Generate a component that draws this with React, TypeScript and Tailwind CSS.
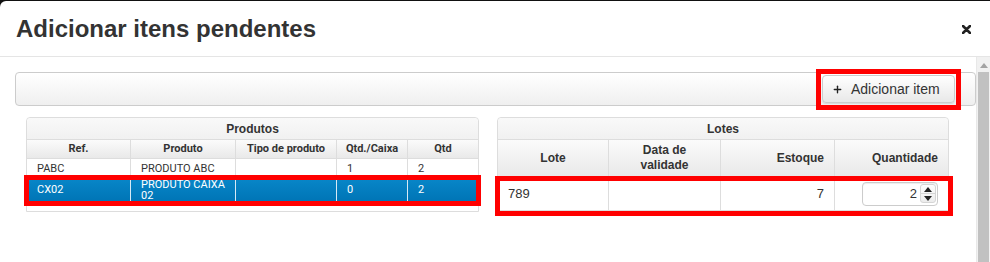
import { Plus } from 'lucide-react';

const PROD_COLS = 'grid grid-cols-[103px_105px_101px_71px_71px]';
const LOTE_COLS = 'grid grid-cols-[110px_112px_114px_114px]';

const prodHeaders = ['Ref.', 'Produto', 'Tipo de produto', 'Qtd./Caixa', 'Qtd'];

function ProdutosTable() {
  return (
    <div className="w-[453px] rounded-t-[4px] border border-[#dddddd] font-['Roboto',sans-serif] text-[11px] text-[#333]">
      <div className="flex h-[22px] items-center justify-center rounded-t-[4px] border-b border-[#dddddd] bg-linear-to-b from-[#f9f9f9] to-[#f1f1f1] font-['Liberation_Sans',sans-serif] text-[12px] font-bold">
        Produtos
      </div>
      <div className={`${PROD_COLS} h-[19px] border-b border-[#dddddd] bg-linear-to-b from-[#fbfbfb] to-[#e9e9e9] font-bold`}>
        {prodHeaders.map((h, i) => (
          <div key={h} className={`flex items-center justify-center ${i > 0 ? 'border-l border-[#dddddd]' : ''}`}>
            {h}
          </div>
        ))}
      </div>
      <div className={`${PROD_COLS} h-[20px]`}>
        {['PABC', 'PRODUTO ABC', '', '1', '2'].map((c, i) => (
          <div key={i} className={`flex items-center pl-[10px] ${i > 0 ? 'border-l border-[#dddddd]' : ''}`}>
            {c}
          </div>
        ))}
      </div>
      <div className="relative">
        <div className={`${PROD_COLS} h-[22px] bg-linear-to-b from-[#0886c8] to-[#0075b6] text-white`}>
          <div className="flex items-center pl-[10px]">CX02</div>
          <div className="flex flex-col justify-center border-l border-[#d7e9f5] pl-[10px] leading-[11px]">
            <span>PRODUTO CAIXA</span>
            <span>02</span>
          </div>
          <div className="border-l border-[#d7e9f5]" />
          <div className="flex items-center border-l border-[#d7e9f5] pl-[10px]">0</div>
          <div className="flex items-center border-l border-[#d7e9f5] pl-[10px]">2</div>
        </div>
        <div className="absolute -top-[4px] -right-[3px] -bottom-[5px] -left-[3px] border-[5px] border-[#ff0000]" />
      </div>
    </div>
  );
}

function Spinner() {
  return (
    <div className="flex h-[24px] w-[76px] items-center justify-end rounded-[4px] border border-[#cccccc] bg-white pr-[1px] shadow-[inset_0_1px_1px_rgba(0,0,0,0.075)]">
      <span className="mr-[3px] text-[13px] text-[#333]">2</span>
      <div className="flex h-[19px] w-[16px] flex-col rounded-[3px] border border-[#d5d5d5] bg-linear-to-b from-[#fdfdfd] to-[#ececec]">
        <div className="flex flex-1 items-center justify-center border-b border-[#d5d5d5]">
          <svg width="8" height="5" viewBox="0 0 8 5">
            <path d="M0 5 L4 0 L8 5 Z" fill="#222" />
          </svg>
        </div>
        <div className="flex flex-1 items-center justify-center">
          <svg width="8" height="5" viewBox="0 0 8 5">
            <path d="M0 0 L8 0 L4 5 Z" fill="#222" />
          </svg>
        </div>
      </div>
    </div>
  );
}

function LotesTable() {
  return (
    <div className="w-[452px] rounded-t-[4px] border border-[#dddddd] font-['Liberation_Sans',sans-serif] text-[12px] text-[#333]">
      <div className="flex h-[22px] items-center justify-center rounded-t-[4px] border-b border-[#dddddd] bg-linear-to-b from-[#f9f9f9] to-[#f1f1f1] font-bold">
        Lotes
      </div>
      <div className={`${LOTE_COLS} h-[37px] border-b border-[#dddddd] bg-linear-to-b from-[#fbfbfb] to-[#e9e9e9] font-bold leading-[15px]`}>
        <div className="flex items-center justify-center">Lote</div>
        <div className="flex items-center justify-center border-l border-[#dddddd] text-center">
          Data de
          <br />
          validade
        </div>
        <div className="flex items-center justify-end border-l border-[#dddddd] pr-[10px]">Estoque</div>
        <div className="flex items-center justify-end border-l border-[#dddddd] pr-[10px]">Quantidade</div>
      </div>
      <div className="relative">
        <div className={`${LOTE_COLS} h-[34px] border-b border-[#dddddd] text-[13px]`}>
          <div className="flex items-center pl-[10px]">789</div>
          <div className="border-l border-[#dddddd]" />
          <div className="flex items-center justify-end border-l border-[#dddddd] pr-[10px]">7</div>
          <div className="flex items-center justify-end border-l border-[#dddddd] pr-[10px]">
            <Spinner />
          </div>
        </div>
        <div className="absolute -top-[1px] -right-[5px] -bottom-[5px] -left-[3px] border-[5px] border-[#ff0000]" />
      </div>
    </div>
  );
}

export default function App() {
  return (
    <div className="h-[262px] w-[990px] overflow-hidden bg-[#111] pt-px font-['Liberation_Sans',sans-serif]">
      <div className="flex h-full flex-col rounded-tl-[6px] bg-white">
        <div className="flex h-[56px] shrink-0 items-center justify-between border-b border-[#e5e5e5] pr-[19px] pl-[16px]">
          <h4 className="text-[24px] font-bold text-[#333]">Adicionar itens pendentes</h4>
          <svg width="9" height="9" viewBox="0 0 9 9" className="mt-[1px]">
            <path d="M1 1 L8 8 M8 1 L1 8" stroke="#222" strokeWidth="2.6" strokeLinecap="round" />
          </svg>
        </div>
        <div className="flex min-h-0 flex-1">
          <div className="flex-1 pt-[15px] pl-[15px]">
            <div className="flex h-[34px] items-center justify-end rounded-[4px] border border-[#cccccc] bg-linear-to-b from-[#ffffff] to-[#efefef] pr-[20px]">
              <div className="relative">
                <button className="flex h-[28px] w-[133px] items-center gap-[8px] rounded-[4px] border border-[#cccccc] bg-linear-to-b from-[#ffffff] to-[#e8e8e8] pl-[9px] text-[14px] text-[#333] shadow-[0_1px_1px_rgba(0,0,0,0.1)]">
                  <Plus size={11} strokeWidth={3} color="#222" />
                  Adicionar item
                </button>
                <div className="absolute -top-[6px] -right-[6px] -bottom-[7px] -left-[6px] border-[5px] border-[#ff0000]" />
              </div>
            </div>
            <div className="mt-[11px] ml-[11px] flex gap-[18px]">
              <ProdutosTable />
              <LotesTable />
            </div>
          </div>
          <div className="flex w-[14px] shrink-0 flex-col items-center border-l border-[#e8e8e8] bg-[#f1f1f1]">
            <svg width="8" height="5" viewBox="0 0 8 5" className="mt-[6px]">
              <path d="M0 5 L4 0 L8 5 Z" fill="#a3a3a3" />
            </svg>
            <div className="mt-[4px] w-[11px] flex-1 bg-[#c1c1c1]" />
          </div>
        </div>
      </div>
    </div>
  );
}
